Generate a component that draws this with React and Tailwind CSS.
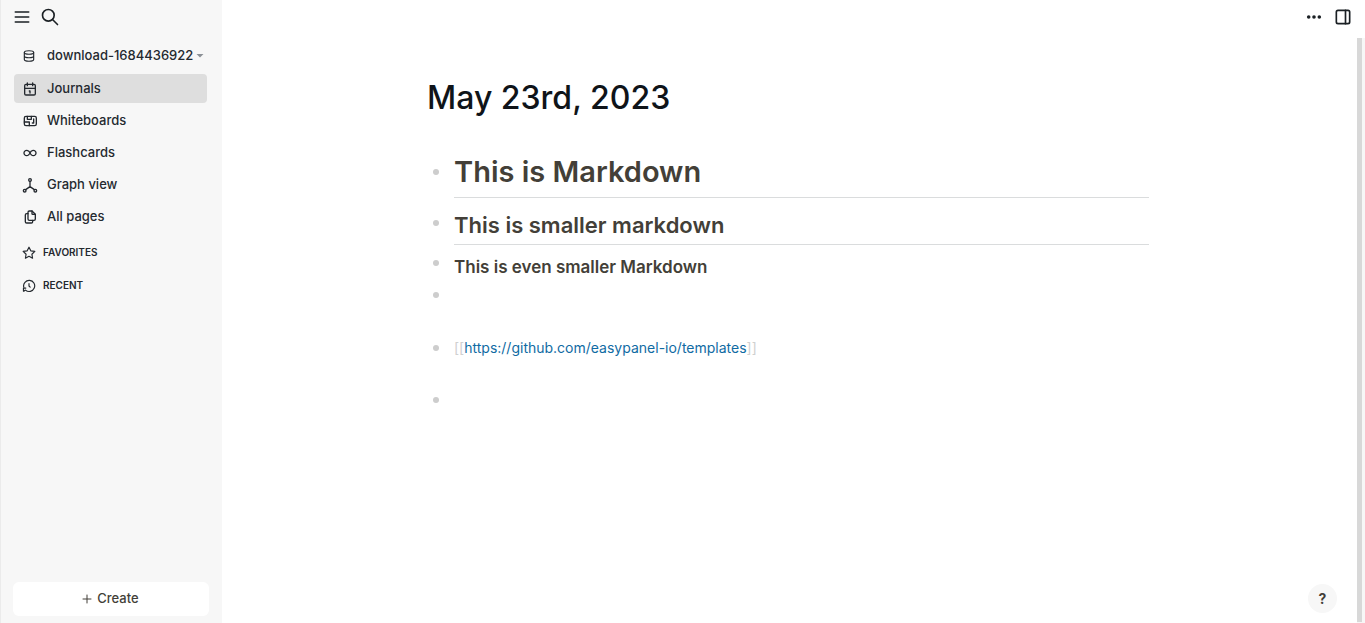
function Icon({ children, className = "size-4", stroke = 2 }) {
  return (
    <svg
      viewBox="0 0 24 24"
      fill="none"
      stroke="currentColor"
      strokeWidth={stroke}
      strokeLinecap="round"
      strokeLinejoin="round"
      aria-hidden="true"
      className={`shrink-0 ${className}`}
    >
      {children}
    </svg>
  );
}

const pages = [
  {
    label: "Journals",
    active: true,
    icon: (
      <>
        <rect x="4" y="5" width="16" height="16" rx="2" />
        <path d="M16 3v4M8 3v4M4 11h16M11 15h1M12 15v3" />
      </>
    ),
  },
  {
    label: "Whiteboards",
    icon: (
      <>
        <rect x="3.500" y="5" width="18" height="14" rx="2.500" />
        <path d="M8 5v4.500h6V5M3.500 13.500h7.500v5.500M17.500 9v6h-2" />
      </>
    ),
  },
  {
    label: "Flashcards",
    icon: (
      <path d="M9.828 9.172a4 4 0 1 0 0 5.656a10 10 0 0 0 2.172 -2.828a10 10 0 0 1 2.172 -2.828a4 4 0 1 1 0 5.656a10 10 0 0 1 -2.172 -2.828a10 10 0 0 0 -2.172 -2.828" />
    ),
  },
  {
    label: "Graph view",
    icon: (
      <>
        <circle cx="12" cy="4.500" r="2" />
        <circle cx="4" cy="20.500" r="2" />
        <circle cx="20" cy="20.500" r="2" />
        <path d="M12 6.500v8M5.500 19L12 14.500l6.500 4.500" />
      </>
    ),
  },
  {
    label: "All pages",
    icon: (
      <>
        <path d="M15 3v4a1 1 0 0 0 1 1h4" />
        <path d="M18 17h-7a2 2 0 0 1 -2 -2v-10a2 2 0 0 1 2 -2h4l5 5v7a2 2 0 0 1 -2 2z" />
        <path d="M16 17v2a2 2 0 0 1 -2 2h-7a2 2 0 0 1 -2 -2v-10a2 2 0 0 1 2 -2h2" />
      </>
    ),
  },
];

function Sidebar() {
  return (
    <aside className="flex w-[222px] shrink-0 flex-col border-l border-[#ebebeb] bg-[#f7f7f7] text-[#24292f]">
      <div className="flex items-center gap-2 px-[11px] pt-[7px] text-[#1b2024]">
        <button type="button" aria-label="Toggle sidebar" className="flex size-5 items-center justify-center">
          <Icon className="size-5">
            <path d="M4 6h16M4 12h16M4 18h16" />
          </Icon>
        </button>
        <button type="button" aria-label="Search" className="flex size-5 items-center justify-center">
          <Icon className="size-5">
            <circle cx="10" cy="10" r="7" />
            <path d="M21 21l-6 -6" />
          </Icon>
        </button>
      </div>

      <button type="button" className="mx-[13px] mt-[14px] flex h-[30px] items-center px-2 text-[13px] font-medium">
        <Icon className="size-[14px]">
          <ellipse cx="12" cy="6" rx="8" ry="3" />
          <path d="M4 6v6a8 3 0 0 0 16 0v-6M4 12v6a8 3 0 0 0 16 0v-6" />
        </Icon>
        <span className="ml-[11px] whitespace-nowrap">download-1684436922</span>
        <svg viewBox="0 0 8 4" aria-hidden="true" className="ml-[3px] h-1 w-2 shrink-0 fill-[#8b9096]">
          <path d="M0.500 0h7L4 3.500z" />
        </svg>
      </button>

      <nav className="mt-[3px] mr-[15px] ml-[13px] flex flex-col gap-[3px] text-[13px] font-medium">
        {pages.map((p) => (
          <a
            key={p.label}
            href="#"
            className={`flex h-[29px] items-center gap-[9px] rounded px-2 ${p.active ? "bg-[#dedede]" : ""}`}
          >
            <Icon>{p.icon}</Icon>
            {p.label}
          </a>
        ))}
      </nav>

      <div className="mx-[13px] mt-[5px] flex flex-col px-2 text-[10px] font-semibold">
        <button type="button" className="flex h-[33px] items-center gap-[7px]">
          <Icon className="size-[14px]">
            <path d="M12 17.750l-6.172 3.245l1.179 -6.873l-5 -4.867l6.900 -1l3.086 -6.253l3.086 6.253l6.900 1l-5 4.867l1.179 6.873z" />
          </Icon>
          FAVORITES
        </button>
        <button type="button" className="flex h-[33px] items-center gap-[7px]">
          <Icon className="size-[14px]">
            <path d="M12 8v4l2 2" />
            <path d="M3 14a9.500 9.500 0 1 1 3 5l-3 2M2.500 21v-5.500h4" />
          </Icon>
          RECENT
        </button>
      </div>

      <button
        type="button"
        className="mt-auto mr-[13px] mb-[7px] ml-3 flex h-[34px] items-center justify-center gap-1 rounded-md bg-white pr-[2px] text-[13px] font-medium text-[#433f38]"
      >
        <Icon className="size-3">
          <path d="M12 4v16M4 12h16" />
        </Icon>
        Create
      </button>
    </aside>
  );
}

function Block({ bullet, className = "", children }) {
  return (
    <li className={`flex gap-[15px] pl-[6px] ${className}`}>
      <span className={`size-[6px] shrink-0 rounded-full bg-[#cdcdcd] ${bullet}`} />
      <div className="min-w-0 flex-1">{children}</div>
    </li>
  );
}

export default function App() {
  return (
    <div className="flex h-screen bg-white font-['Inter',sans-serif]">
      <Sidebar />
      <div className="flex min-w-0 flex-1 flex-col">
        <header className="flex items-center justify-end gap-[9px] px-3 pt-[7px] text-[#1b2024]">
          <button type="button" aria-label="More" className="flex size-5 items-center justify-center">
            <svg viewBox="0 0 16 16" aria-hidden="true" className="size-4 fill-current">
              <circle cx="2.700" cy="8" r="1.800" />
              <circle cx="8" cy="8" r="1.800" />
              <circle cx="13.300" cy="8" r="1.800" />
            </svg>
          </button>
          <button type="button" aria-label="Toggle right sidebar" className="flex size-5 items-center justify-center">
            <Icon className="size-5">
              <rect x="4" y="4" width="16" height="16" rx="2" />
              <path d="M15 4v16" />
            </Icon>
          </button>
        </header>

        <div className="mt-[11px] flex min-h-0 flex-1">
          <main className="min-w-0 flex-1 pr-[27px] pl-6 text-[#433f38]">
            <div className="mx-auto max-w-[722px] pt-9">
              <h1 className="text-[32px] leading-[48px] font-medium text-[#0f1419]">May 23rd, 2023</h1>
              <ul className="mt-7">
                <Block bullet="mt-[19px]" className="h-[58px]">
                  <h2 className="border-b border-[#dadcdd] pt-[2px] pb-[5px] text-[29px] leading-10 font-semibold">This is Markdown</h2>
                </Block>
                <Block bullet="mt-3" className="h-[42px]">
                  <h3 className="border-b border-[#dadcdd] pt-[2px] pb-1 text-[22px] leading-[30px] font-semibold">This is smaller markdown</h3>
                </Block>
                <Block bullet="mt-[10px]" className="h-8">
                  <h4 className="pt-1 text-[17px] leading-[26px] font-semibold">This is even smaller Markdown</h4>
                </Block>
                <Block bullet="mt-[10px]" className="h-[53px]" />
                <Block bullet="mt-[10px]" className="h-[52px]">
                  <p className="text-[14px] leading-[26px] text-[#d0d0d0]">
                    [[
                    <a href="https://github.com/easypanel-io/templates" className="text-[#106ba3]">
                      https://github.com/easypanel-io/templates
                    </a>
                    ]]
                  </p>
                </Block>
                <Block bullet="mt-[10px]" className="h-8" />
              </ul>
            </div>
          </main>
          <div className="flex w-2 shrink-0 flex-col bg-[#f7f7f7] pr-[3px] pb-px">
            <div className="flex-1 bg-[#d8d8d8]" />
          </div>
        </div>
      </div>
      <button
        type="button"
        aria-label="Help"
        className="fixed right-7 bottom-[10px] flex size-[29px] items-center justify-center rounded-full bg-[#f7f7f7] text-[14px] font-bold text-[#433f38]"
      >
        ?
      </button>
    </div>
  );
}
